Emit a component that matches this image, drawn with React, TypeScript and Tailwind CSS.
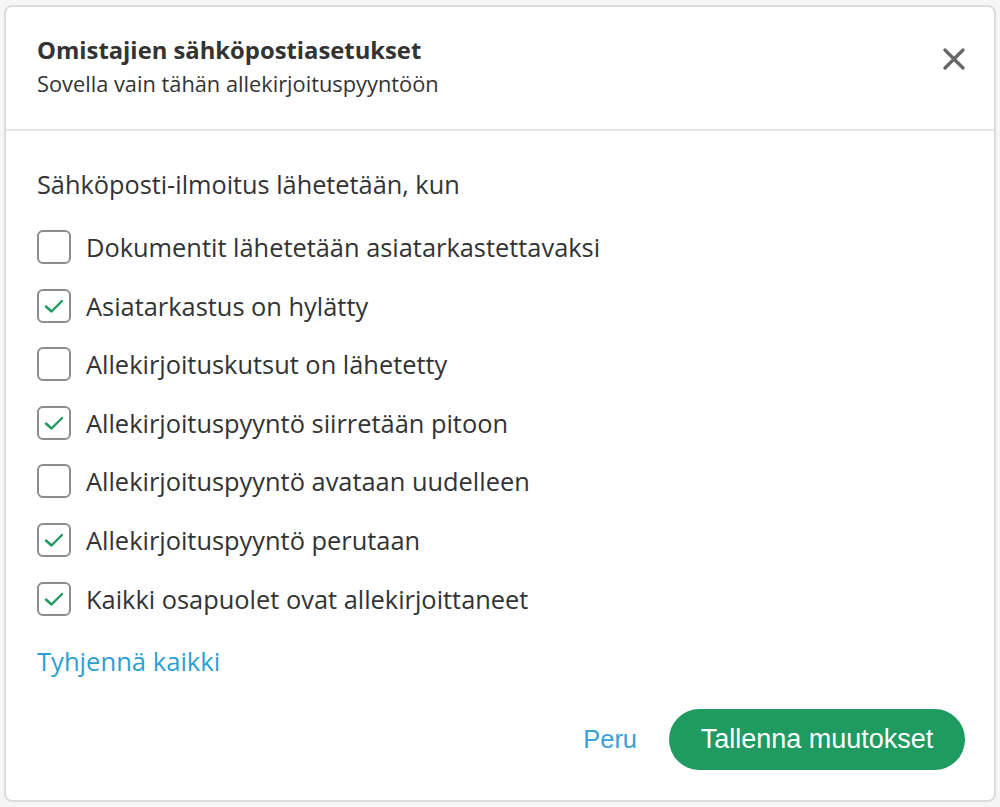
import { useState } from "react";

const items = [
	{ label: "Dokumentit lähetetään asiatarkastettavaksi", checked: false },
	{ label: "Asiatarkastus on hylätty", checked: true },
	{ label: "Allekirjoituskutsut on lähetetty", checked: false },
	{ label: "Allekirjoituspyyntö siirretään pitoon", checked: true },
	{ label: "Allekirjoituspyyntö avataan uudelleen", checked: false },
	{ label: "Allekirjoituspyyntö perutaan", checked: true },
	{ label: "Kaikki osapuolet ovat allekirjoittaneet", checked: true },
];

function CheckBox({ checked }: { checked: boolean }) {
	return (
		<span className="flex h-[34px] w-[34px] shrink-0 items-center justify-center rounded-[6px] border-2 border-[#8c8c8c] bg-white">
			{checked && (
				<svg width="20" height="16" viewBox="0 0 20 16" fill="none">
					<path
						d="M2 8.5 L7.5 13.5 L18 3"
						stroke="#1f9a5f"
						strokeWidth="2.4"
						strokeLinecap="round"
						strokeLinejoin="round"
					/>
				</svg>
			)}
		</span>
	);
}

export default function App() {
	const [state, setState] = useState(items.map((i) => i.checked));

	return (
		<div className="min-h-[807px] bg-[#f6f6f6] pl-[4px] pt-[5px] font-['Open_Sans',sans-serif] text-[#333333]">
			<div className="flex h-[797px] w-[992px] flex-col rounded-[8px] border-2 border-[#dcdcdc] bg-white">
				<div className="flex h-[124px] items-start justify-between border-b-2 border-[#e6e6e6] pl-[31px] pr-[25px] pt-[28px]">
					<div>
						<h1 className="text-[23.8px] font-bold leading-[30px] text-[#333333]">
							Omistajien sähköpostiasetukset
						</h1>
						<p className="mt-[6px] text-[21.8px] leading-[26px]">
							Sovella vain tähän allekirjoituspyyntöön
						</p>
					</div>
					<button className="mt-[9px] p-1" aria-label="Sulje">
						<svg width="22" height="22" viewBox="0 0 22 22">
							<path
								d="M2 2 L20 20 M20 2 L2 20"
								stroke="#666666"
								strokeWidth="3.2"
								strokeLinecap="round"
							/>
						</svg>
					</button>
				</div>

				<div className="flex flex-1 flex-col pl-[31px] pr-[29px] pt-[38px]">
					<p className="text-[25.3px] leading-[30px]">
						Sähköposti-ilmoitus lähetetään, kun
					</p>
					<div className="mt-[31px] flex flex-col gap-[24.6px]">
						{items.map((item, i) => (
							<label
								key={item.label}
								className="flex cursor-pointer items-center gap-[15px]"
								onClick={() =>
									setState((s) => s.map((v, j) => (j === i ? !v : v)))
								}
							>
								<CheckBox checked={state[i]} />
								<span className="text-[25.4px] leading-[34px]">{item.label}</span>
							</label>
						))}
					</div>
					<button className="mt-[31px] self-start text-[25.6px] leading-[30px] text-[#2e9fd3]">
						Tyhjennä kaikki
					</button>

					<div className="mt-auto mb-[30px] flex items-center justify-end gap-[32px]">
						<button className="font-['Liberation_Sans',sans-serif] text-[25.4px] text-[#3aa0d6]">
							Peru
						</button>
						<button className="h-[61px] w-[296px] rounded-full bg-[#1f9a61] font-['Liberation_Sans',sans-serif] text-[27px] text-white">
							Tallenna muutokset
						</button>
					</div>
				</div>
			</div>
		</div>
	);
}
